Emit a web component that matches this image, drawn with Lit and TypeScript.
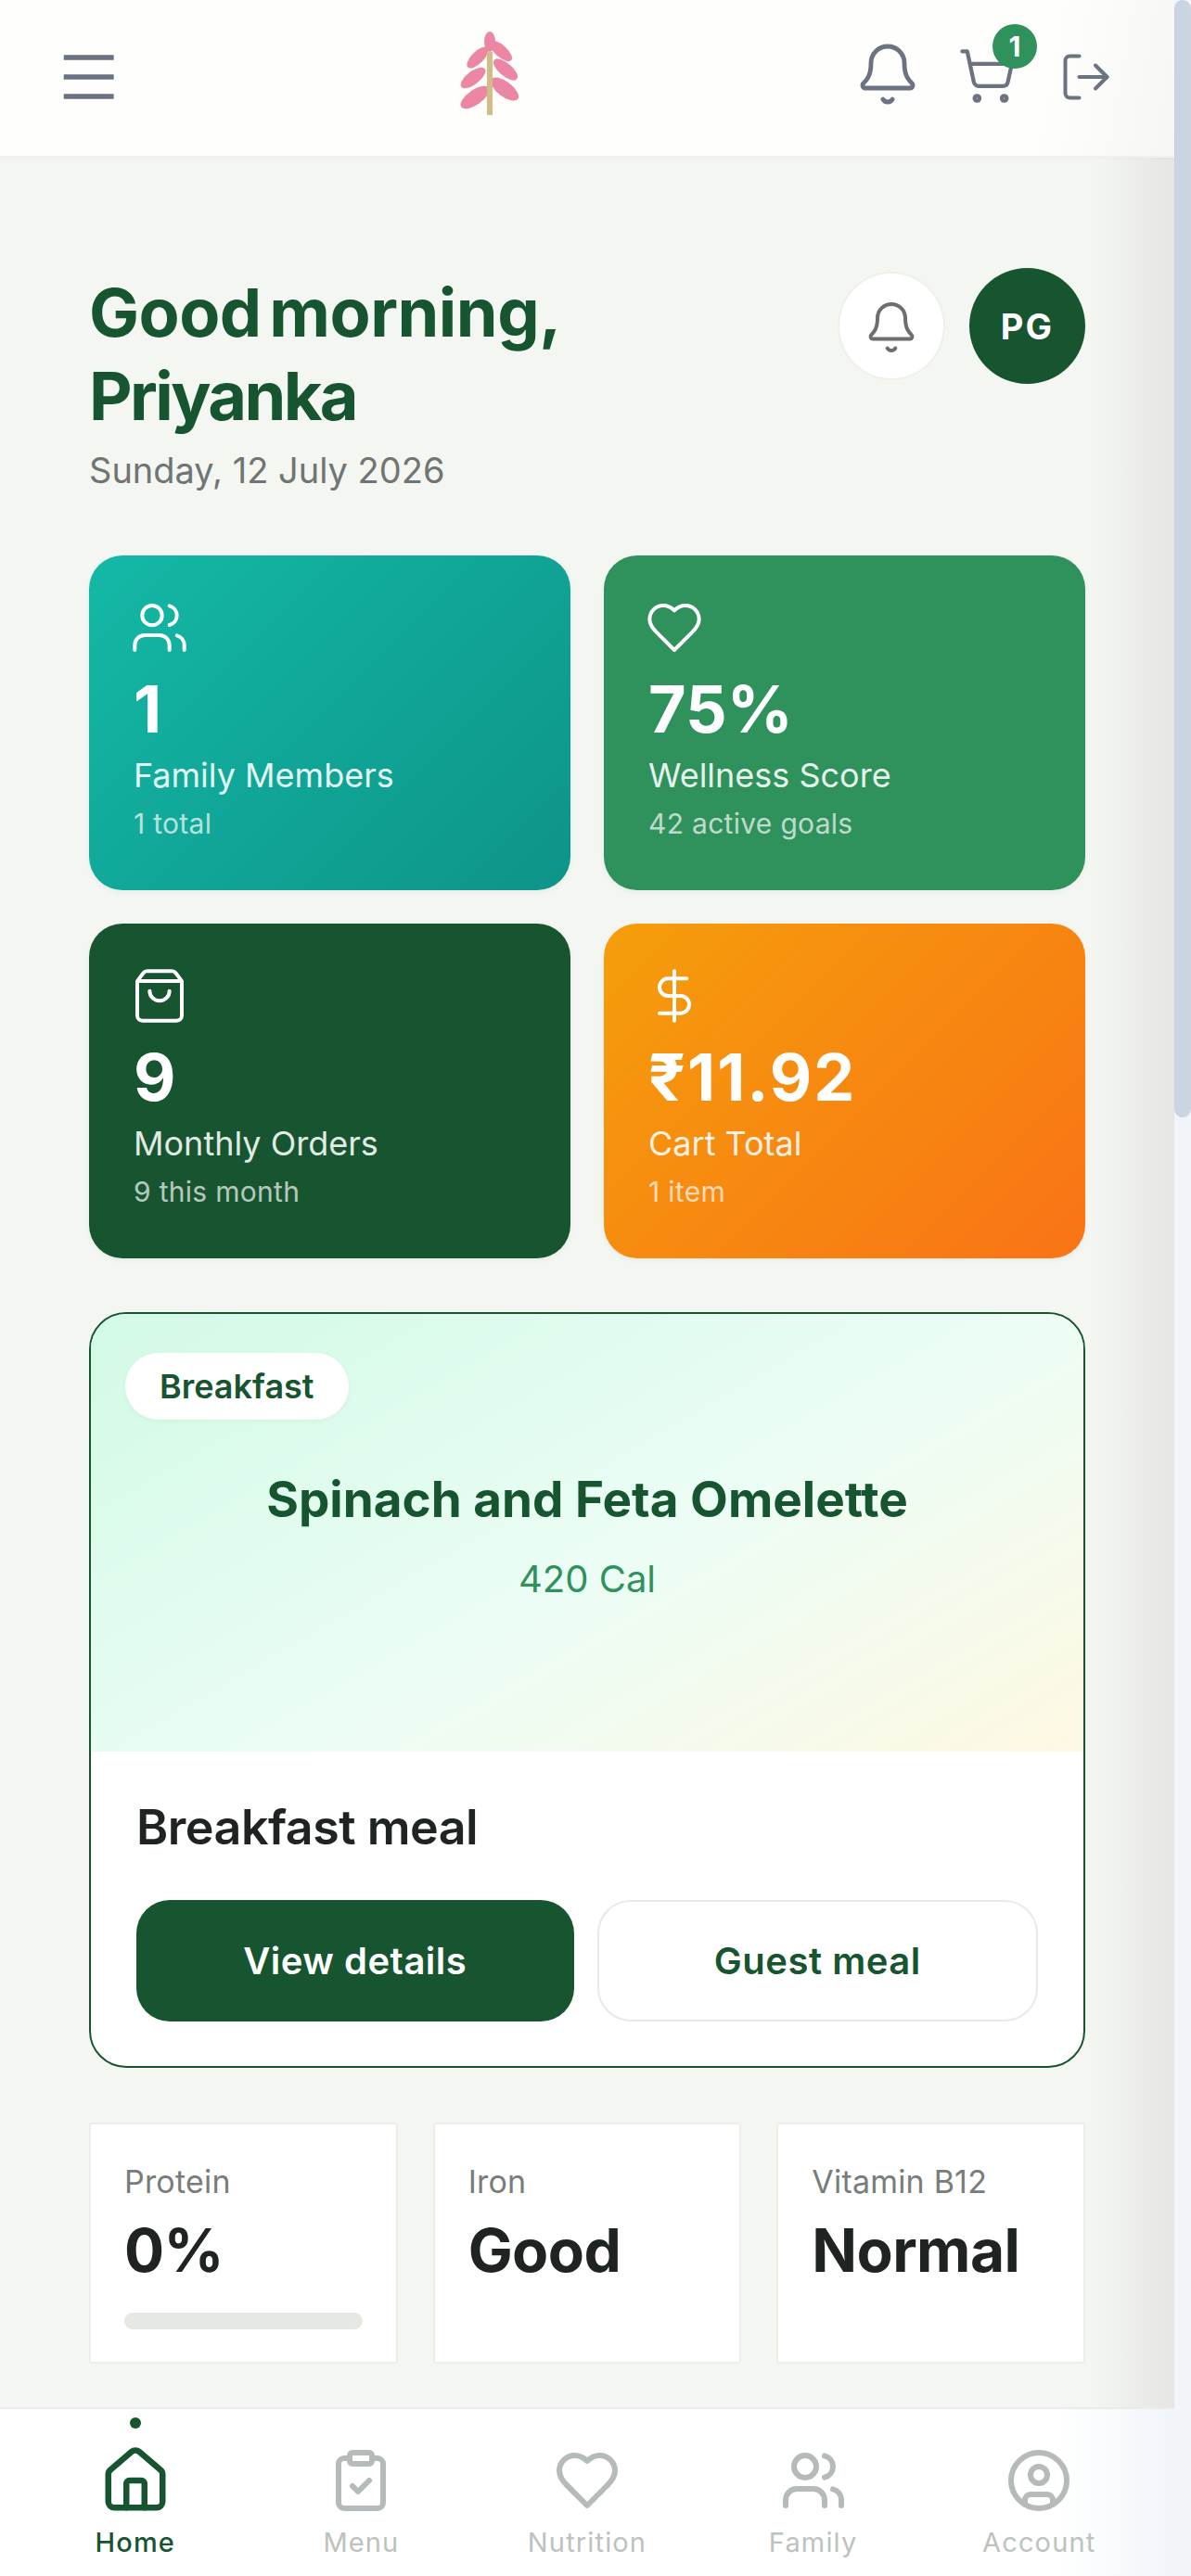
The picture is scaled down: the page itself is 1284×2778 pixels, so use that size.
import { LitElement, html, css, svg } from "lit";
import { customElement } from "lit/decorators.js";

const icons = {
  menu: svg`<path d="M4.5 6h15.4M4.5 12h15.4M4.5 18h15.4" />`,
  bell: svg`<path d="M10.268 21a2 2 0 0 0 3.464 0" /><path d="M3.262 15.326A1 1 0 0 0 4 17h16a1 1 0 0 0 .74-1.673C19.41 13.956 18 12.499 18 8A6 6 0 0 0 6 8c0 4.499-1.411 5.956-2.738 7.326" />`,
  cart: svg`<circle cx="8" cy="21" r="1" /><circle cx="19" cy="21" r="1" /><path d="M2.05 2.05h2l2.66 12.42a2 2 0 0 0 2 1.58h9.78a2 2 0 0 0 1.95-1.57l1.65-7.43H5.12" />`,
  logout: svg`<path d="m16 17 5-5-5-5" /><path d="M21 12H9" /><path d="M9 21H5a2 2 0 0 1-2-2V5a2 2 0 0 1 2-2h4" />`,
  users: svg`<circle cx="9" cy="7" r="4" /><path d="M16 3.128a4 4 0 0 1 0 7.744" /><path d="M22 21v-2a4 4 0 0 0-3-3.87" /><path d="M16 21v-2a4 4 0 0 0-4-4H6a4 4 0 0 0-4 4v2" />`,
  heart: svg`<path d="M19 14c1.49-1.46 3-3.21 3-5.5A5.5 5.5 0 0 0 16.5 3c-1.76 0-3 .5-4.5 2-1.5-1.5-2.74-2-4.5-2A5.5 5.5 0 0 0 2 8.5c0 2.3 1.5 4.05 3 5.5l7 7Z" />`,
  bag: svg`<path d="M16 10a4 4 0 0 1-8 0" /><path d="M3.103 6.034h17.794" /><path d="M3.4 5.467a2 2 0 0 0-.4 1.2V20a2 2 0 0 0 2 2h14a2 2 0 0 0 2-2V6.667a2 2 0 0 0-.4-1.2l-2-2.667A2 2 0 0 0 17 2H7a2 2 0 0 0-1.6.8z" />`,
  dollar: svg`<path d="M12 2v20" /><path d="M17 5H9.5a3.5 3.5 0 0 0 0 7h5a3.5 3.5 0 0 1 0 7H6" />`,
  home: svg`<path d="M15 21v-8a1 1 0 0 0-1-1h-4a1 1 0 0 0-1 1v8" /><path d="M3 10a2 2 0 0 1 .709-1.528l7-5.999a2 2 0 0 1 2.582 0l7 5.999A2 2 0 0 1 21 10v9a2 2 0 0 1-2 2H5a2 2 0 0 1-2-2z" />`,
  clipboard: svg`<rect x="8" y="2" width="8" height="4" rx="1" /><path d="M16 4h2a2 2 0 0 1 2 2v14a2 2 0 0 1-2 2H6a2 2 0 0 1-2-2V6a2 2 0 0 1 2-2h2" /><path d="m9 14 2 2 4-4" />`,
  account: svg`<circle cx="12" cy="12" r="10" /><circle cx="12" cy="10" r="3" /><path d="M7 20.662V19a2 2 0 0 1 2-2h6a2 2 0 0 1 2 2v1.662" />`,
};

type IconName = keyof typeof icons;

const icon = (name: IconName, cls = "") =>
  html`<svg class="icon ${cls}" viewBox="0 0 24 24">${icons[name]}</svg>`;

const stats: { icon: IconName; value: string; label: string; note: string; tone: string }[] = [
  { icon: "users", value: "1", label: "Family Members", note: "1 total", tone: "teal" },
  { icon: "heart", value: "75%", label: "Wellness Score", note: "42 active goals", tone: "green" },
  { icon: "bag", value: "9", label: "Monthly Orders", note: "9 this month", tone: "forest" },
  { icon: "dollar", value: "₹11.92", label: "Cart Total", note: "1 item", tone: "orange" },
];

const nutrients = [
  { label: "Protein", value: "0%", bar: true },
  { label: "Iron", value: "Good", bar: false },
  { label: "Vitamin B12", value: "Normal", bar: false },
];

const tabs: { icon: IconName; label: string; active?: boolean }[] = [
  { icon: "home", label: "Home", active: true },
  { icon: "clipboard", label: "Menu" },
  { icon: "heart", label: "Nutrition" },
  { icon: "users", label: "Family" },
  { icon: "account", label: "Account" },
];

@customElement("app-root")
export class AppRoot extends LitElement {
  static styles = css`
    :host {
      display: flex;
      height: 2778px;
      overflow: hidden;
      font-family: Inter, "Noto Sans", sans-serif;
      color: #1f2322;
      background: #f1f5f9;
    }

    * {
      box-sizing: border-box;
    }

    .icon {
      display: block;
      fill: none;
      stroke: currentColor;
      stroke-width: 1.6;
      stroke-linecap: round;
      stroke-linejoin: round;
      flex: none;
    }

    .app {
      flex: 1;
      min-width: 0;
      display: flex;
      flex-direction: column;
    }

    /* fake scrollbar */
    .scrollbar {
      width: 18px;
      flex: none;
      background: #f1f5f9;
    }

    .thumb {
      height: 1205px;
      background: #cbd5e1;
      border-radius: 9px;
    }

    /* Header */
    .topbar {
      position: relative;
      height: 170px;
      flex: none;
      display: flex;
      align-items: center;
      justify-content: space-between;
      padding: 0 65px 2px 53px;
      background: linear-gradient(100deg, #fefefd 88%, #f6f6f5);
      border-bottom: 2px solid #eef0f2;
      box-shadow: 0 1px 4px rgba(0, 0, 0, 0.03);
      color: #6b7280;
    }

    .topbar .menu {
      width: 84px;
      height: 84px;
      stroke-linecap: butt;
    }

    .logo {
      width: 72px;
      height: 100px;
      display: block;
      margin-right: 3px;
    }

    .top-actions {
      display: flex;
      align-items: center;
    }

    .top-actions .bell {
      width: 72px;
      height: 72px;
      margin-top: -6px;
    }

    .cart {
      position: relative;
      margin-left: 39px;
    }

    .cart .icon {
      width: 64px;
      height: 64px;
      margin-top: -2px;
    }

    .cart-badge {
      position: absolute;
      left: 38px;
      top: -26px;
      width: 48px;
      height: 48px;
      border-radius: 50%;
      background: #2f915c;
      color: #fff;
      font-size: 30px;
      font-weight: 700;
      display: flex;
      align-items: center;
      justify-content: center;
    }

    .top-actions .logout {
      width: 60px;
      height: 60px;
      margin-left: 45px;
    }

    /* Main */
    .page {
      flex: 1;
      min-height: 0;
      overflow: hidden;
      padding: 119px 96px 0;
      background: linear-gradient(90deg, #f4f6f2 93%, #e5e6e3);
    }

    .greeting {
      display: flex;
      justify-content: space-between;
      align-items: flex-start;
    }

    h1 {
      margin: 3px 0 0;
      font-size: 72px;
      line-height: 90px;
      font-weight: 700;
      letter-spacing: -2.6px;
      color: #16552f;
    }

    /* the first line sets a little wider, with a tight word gap */
    .line-one {
      letter-spacing: -0.5px;
      word-spacing: -8px;
    }

    .date {
      margin-top: 12px;
      font-size: 38px;
      line-height: 46px;
      color: #6f7572;
    }

    .greeting-actions {
      display: flex;
      align-items: center;
      gap: 26px;
    }

    .round-bell {
      width: 116px;
      height: 117px;
      border-radius: 50%;
      background: #fff;
      border: 2px solid #eef0ec;
      display: flex;
      align-items: center;
      justify-content: center;
      color: #6b6f6d;
    }

    .round-bell .icon {
      width: 60px;
      height: 60px;
      margin-top: 2px;
    }

    .avatar {
      width: 125px;
      height: 125px;
      border-radius: 50%;
      background: #16552f;
      color: #fff;
      font-size: 38px;
      font-weight: 700;
      letter-spacing: 0.06em;
      display: flex;
      align-items: center;
      justify-content: center;
    }

    /* Stat cards */
    .stats {
      margin-top: 69px;
      display: grid;
      grid-template-columns: 1fr 1fr;
      gap: 36px;
    }

    .stat {
      height: 361px;
      border-radius: 36px;
      padding: 46px 48px 0;
      color: #fff;
      box-shadow: 0 2px 6px rgba(0, 0, 0, 0.05);
    }

    .stat .icon {
      width: 64px;
      height: 64px;
      margin-left: -4px;
      stroke-width: 1.5;
    }

    .teal {
      background: linear-gradient(135deg, #14b8a6, #0d9488);
    }

    .green {
      background: #2f915c;
    }

    .forest {
      background: #16552f;
    }

    .orange {
      background: linear-gradient(135deg, #f59e0b, #f97316);
    }

    .stat-value {
      margin-top: 14px;
      font-size: 70px;
      line-height: 84px;
      font-weight: 700;
    }

    .orange .stat-value {
      letter-spacing: 2px;
    }

    .stat-label {
      margin-top: 7px;
      font-size: 36px;
      line-height: 44px;
      opacity: 0.88;
    }

    .stat-note {
      margin-top: 12px;
      font-size: 30px;
      line-height: 36px;
      letter-spacing: 0.3px;
      opacity: 0.68;
    }

    /* Meal card */
    .meal {
      margin-top: 58px;
      height: 815px;
      border: 2px solid #16552f;
      border-radius: 40px;
      overflow: hidden;
      background: #fff;
    }

    .meal-hero {
      position: relative;
      height: 472px;
      padding-top: 168px;
      background: linear-gradient(150deg, #d1fae5, #ecfdf5 55%, #fef8e3);
      text-align: center;
    }

    .meal-tag {
      position: absolute;
      left: 37px;
      top: 42px;
      height: 72px;
      padding: 0 37px;
      border-radius: 36px;
      background: #fff;
      color: #16552f;
      font-size: 36px;
      font-weight: 600;
      display: flex;
      align-items: center;
      box-shadow: 0 2px 6px rgba(0, 0, 0, 0.04);
    }

    .meal-name {
      font-size: 53px;
      line-height: 64px;
      font-weight: 700;
      color: #16552f;
    }

    .meal-cal {
      margin-top: 30px;
      font-size: 40px;
      line-height: 48px;
      color: #2f915c;
    }

    .meal-body {
      padding: 50px 49px 0;
    }

    .meal-title {
      font-size: 52px;
      line-height: 64px;
      font-weight: 600;
      letter-spacing: -0.5px;
    }

    .meal-buttons {
      margin-top: 46px;
      display: flex;
      gap: 25px;
    }

    .btn {
      flex: 1;
      box-sizing: content-box;
      height: 131px;
      padding: 0;
      border: 0;
      border-radius: 36px;
      font: inherit;
      font-size: 40px;
      font-weight: 600;
      letter-spacing: 0.5px;
      background: #16552f;
      color: #fff;
    }

    .btn.ghost {
      height: 127px;
      background: #fff;
      color: #16552f;
      border: 2px solid #e8eae8;
    }

    /* Nutrient tiles */
    .nutrients {
      margin-top: 59px;
      display: grid;
      grid-template-columns: repeat(3, 1fr);
      gap: 38px;
    }

    .nutrient {
      height: 260px;
      padding: 42px 36px 0;
      background: #fff;
      border: 2px solid #eceee9;
      border-radius: 3px;
    }

    .nutrient-label {
      font-size: 34px;
      line-height: 40px;
      letter-spacing: 0.2px;
      color: #777d7a;
    }

    .nutrient-value {
      margin-top: 15px;
      font-size: 64px;
      line-height: 78px;
      font-weight: 700;
      letter-spacing: -0.6px;
      color: #1f2322;
    }

    .bar {
      margin-top: 28px;
      height: 18px;
      border-radius: 9px;
      background: #e6e9e3;
    }

    /* Bottom nav */
    .tabs {
      height: 182px;
      flex: none;
      display: grid;
      grid-template-columns: repeat(5, 1fr);
      padding: 0 24px;
      background: linear-gradient(90deg, #fff 90%, #f1f5f9);
      border-top: 2px solid #e9ecea;
    }

    .tab {
      position: relative;
      height: 100%;
      padding-top: 41px;
      display: flex;
      flex-direction: column;
      align-items: center;
      color: #b5bbb6;
    }

    .tab .icon {
      width: 72px;
      height: 72px;
      stroke-width: 2;
    }

    .tab.active {
      color: #16552f;
    }

    .tab.active .icon {
      width: 78px;
      height: 78px;
      margin: -3px 0;
    }

    .tab.active::before {
      content: "";
      position: absolute;
      top: 9px;
      width: 12px;
      height: 12px;
      border-radius: 50%;
      background: #16552f;
    }

    .tab-label {
      margin-top: 13px;
      font-size: 29px;
      line-height: 36px;
      font-weight: 400;
      letter-spacing: 0.04em;
      color: #bcc2bd;
    }

    .tab.active .tab-label {
      font-weight: 500;
      color: #16552f;
    }
  `;

  render() {
    return html`
      <div class="app">
        <header class="topbar">
          ${icon("menu", "menu")}
          <svg class="logo" viewBox="490 34 72 100">
            <g fill="#ec87a3">
              <ellipse cx="526" cy="46" rx="6" ry="11" />
              <ellipse cx="538" cy="56" rx="6.5" ry="15" transform="rotate(-48 538 56)" />
              <ellipse cx="513" cy="63" rx="6.5" ry="15" transform="rotate(45 513 63)" />
              <ellipse cx="543" cy="76" rx="7" ry="16" transform="rotate(-50 543 76)" />
              <ellipse cx="508" cy="85" rx="7" ry="16" transform="rotate(52 508 85)" />
              <ellipse cx="542" cy="97" rx="8" ry="18" transform="rotate(-53 542 97)" />
              <ellipse cx="510" cy="106" rx="8" ry="18" transform="rotate(55 510 106)" />
            </g>
            <rect x="523" y="57" width="6" height="68" fill="#d4bc8a" />
          </svg>
          <div class="top-actions">
            ${icon("bell", "bell")}
            <div class="cart">
              ${icon("cart")}
              <span class="cart-badge">1</span>
            </div>
            ${icon("logout", "logout")}
          </div>
        </header>

        <main class="page">
          <section class="greeting">
            <div>
              <h1><span class="line-one">Good morning,</span><br />Priyanka</h1>
              <div class="date">Sunday, 12 July 2026</div>
            </div>
            <div class="greeting-actions">
              <div class="round-bell">${icon("bell")}</div>
              <div class="avatar">PG</div>
            </div>
          </section>

          <section class="stats">
            ${stats.map(
              (s) => html`
                <div class="stat ${s.tone}">
                  ${icon(s.icon)}
                  <div class="stat-value">${s.value}</div>
                  <div class="stat-label">${s.label}</div>
                  <div class="stat-note">${s.note}</div>
                </div>
              `
            )}
          </section>

          <section class="meal">
            <div class="meal-hero">
              <span class="meal-tag">Breakfast</span>
              <div class="meal-name">Spinach and Feta Omelette</div>
              <div class="meal-cal">420 Cal</div>
            </div>
            <div class="meal-body">
              <div class="meal-title">Breakfast meal</div>
              <div class="meal-buttons">
                <button class="btn">View details</button>
                <button class="btn ghost">Guest meal</button>
              </div>
            </div>
          </section>

          <section class="nutrients">
            ${nutrients.map(
              (n) => html`
                <div class="nutrient">
                  <div class="nutrient-label">${n.label}</div>
                  <div class="nutrient-value">${n.value}</div>
                  ${n.bar ? html`<div class="bar"></div>` : null}
                </div>
              `
            )}
          </section>
        </main>

        <nav class="tabs">
          ${tabs.map(
            (t) => html`
              <div class="tab ${t.active ? "active" : ""}">
                ${icon(t.icon)}
                <span class="tab-label">${t.label}</span>
              </div>
            `
          )}
        </nav>
      </div>
      <div class="scrollbar"><div class="thumb"></div></div>
    `;
  }
}
